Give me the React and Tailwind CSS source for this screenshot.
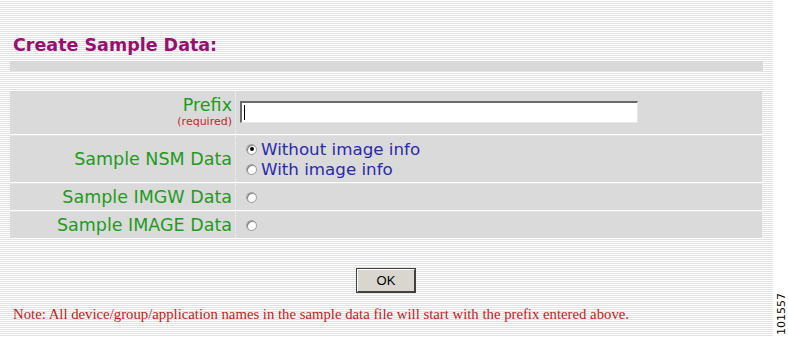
import React from 'react';

const Radio = ({ checked }) => (
  <span className="inline-flex h-[11px] w-[11px] items-center justify-center rounded-full border border-[#9a9a9a] bg-white shadow-[inset_1px_1px_0_#808080]">
    {checked && <span className="h-[4px] w-[4px] rounded-full bg-black" />}
  </span>
);

const Label = ({ children }) => (
  <div className="flex w-[226px] flex-col items-end justify-center border-r border-dotted border-[#f4f4f4] pr-[3px] text-[17.5px] leading-[20px] text-[#1e9a1e]">
    {children}
  </div>
);

const App = () => {
  return (
    <div className="flex h-[337px] w-[788px] bg-white font-['DejaVu_Sans',Verdana,sans-serif]">
      <div className="flex w-[773px] flex-col bg-[repeating-linear-gradient(to_bottom,#ffffff_0px,#ffffff_1px,#e2e2e2_1px,#e2e2e2_2px)] pl-[10px] pr-[10px]">
        <h1 className="mt-[35px] pl-[3px] text-[17.5px] font-bold leading-[21px] text-[#990f6e]">
          Create Sample Data:
        </h1>
        <div className="mt-[5px] h-[10px] w-[753px] bg-[#d9d9d9]" />

        <div className="mt-[20px] flex w-[752px] flex-col gap-[2px]">
          <div className="flex h-[43px] bg-[#dadada]">
            <Label>
              <span className="leading-[19px]">Prefix</span>
              <span className="text-[11px] leading-[14px] text-[#c0282a]">(required)</span>
            </Label>
            <div className="flex items-center pl-[4px]">
              <div className="mb-[1px] h-[22px] w-[398px] border-t-2 border-l-2 border-t-[#6a6a6a] border-l-[#6a6a6a] border-b border-r border-b-[#e8e8e8] border-r-[#e8e8e8] bg-white pl-[2px] pt-[2px]">
                <div className="h-[15px] w-px bg-black" />
              </div>
            </div>
          </div>

          <div className="flex h-[46px] bg-[#dadada]">
            <Label>
              <span>Sample NSM Data</span>
            </Label>
            <div className="flex flex-col justify-center pl-[10px] text-[16.7px] leading-[20px] text-[#2a2aa8]">
              <div className="flex items-center gap-[4px]">
                <Radio checked />
                <span>Without image info</span>
              </div>
              <div className="flex items-center gap-[4px]">
                <Radio />
                <span>With image info</span>
              </div>
            </div>
          </div>

          <div className="flex h-[26px] bg-[#dadada]">
            <Label>
              <span>Sample IMGW Data</span>
            </Label>
            <div className="flex items-center pl-[10px]">
              <Radio />
            </div>
          </div>

          <div className="flex h-[26px] bg-[#dadada]">
            <Label>
              <span>Sample IMAGE Data</span>
            </Label>
            <div className="flex items-center pl-[10px]">
              <Radio />
            </div>
          </div>
        </div>

        <div className="mt-[31px] flex w-[752px] justify-center">
          <button className="h-[23px] w-[58px] border border-t-[#ffffff] border-l-[#ffffff] border-b-[#404040] border-r-[#404040] bg-[#d9d6cf] font-['Liberation_Sans',Arial,sans-serif] text-[13px] text-black outline outline-1 outline-[#404040]">
            OK
          </button>
        </div>

        <p className="mt-[14px] pl-[3px] font-['Liberation_Serif','Times_New_Roman',serif] text-[14.75px] leading-[17px] text-[#c41a1a]">
          Note: All device/group/application names in the sample data file will start with the prefix entered above.
        </p>
      </div>
      <div className="flex w-[15px] flex-col justify-end pb-[2px] pl-[3px]">
        <span className="rotate-180 font-['DejaVu_Sans',sans-serif] text-[11px] leading-[11px] text-black [writing-mode:vertical-rl]">
          101557
        </span>
      </div>
    </div>
  );
};

export default App;
